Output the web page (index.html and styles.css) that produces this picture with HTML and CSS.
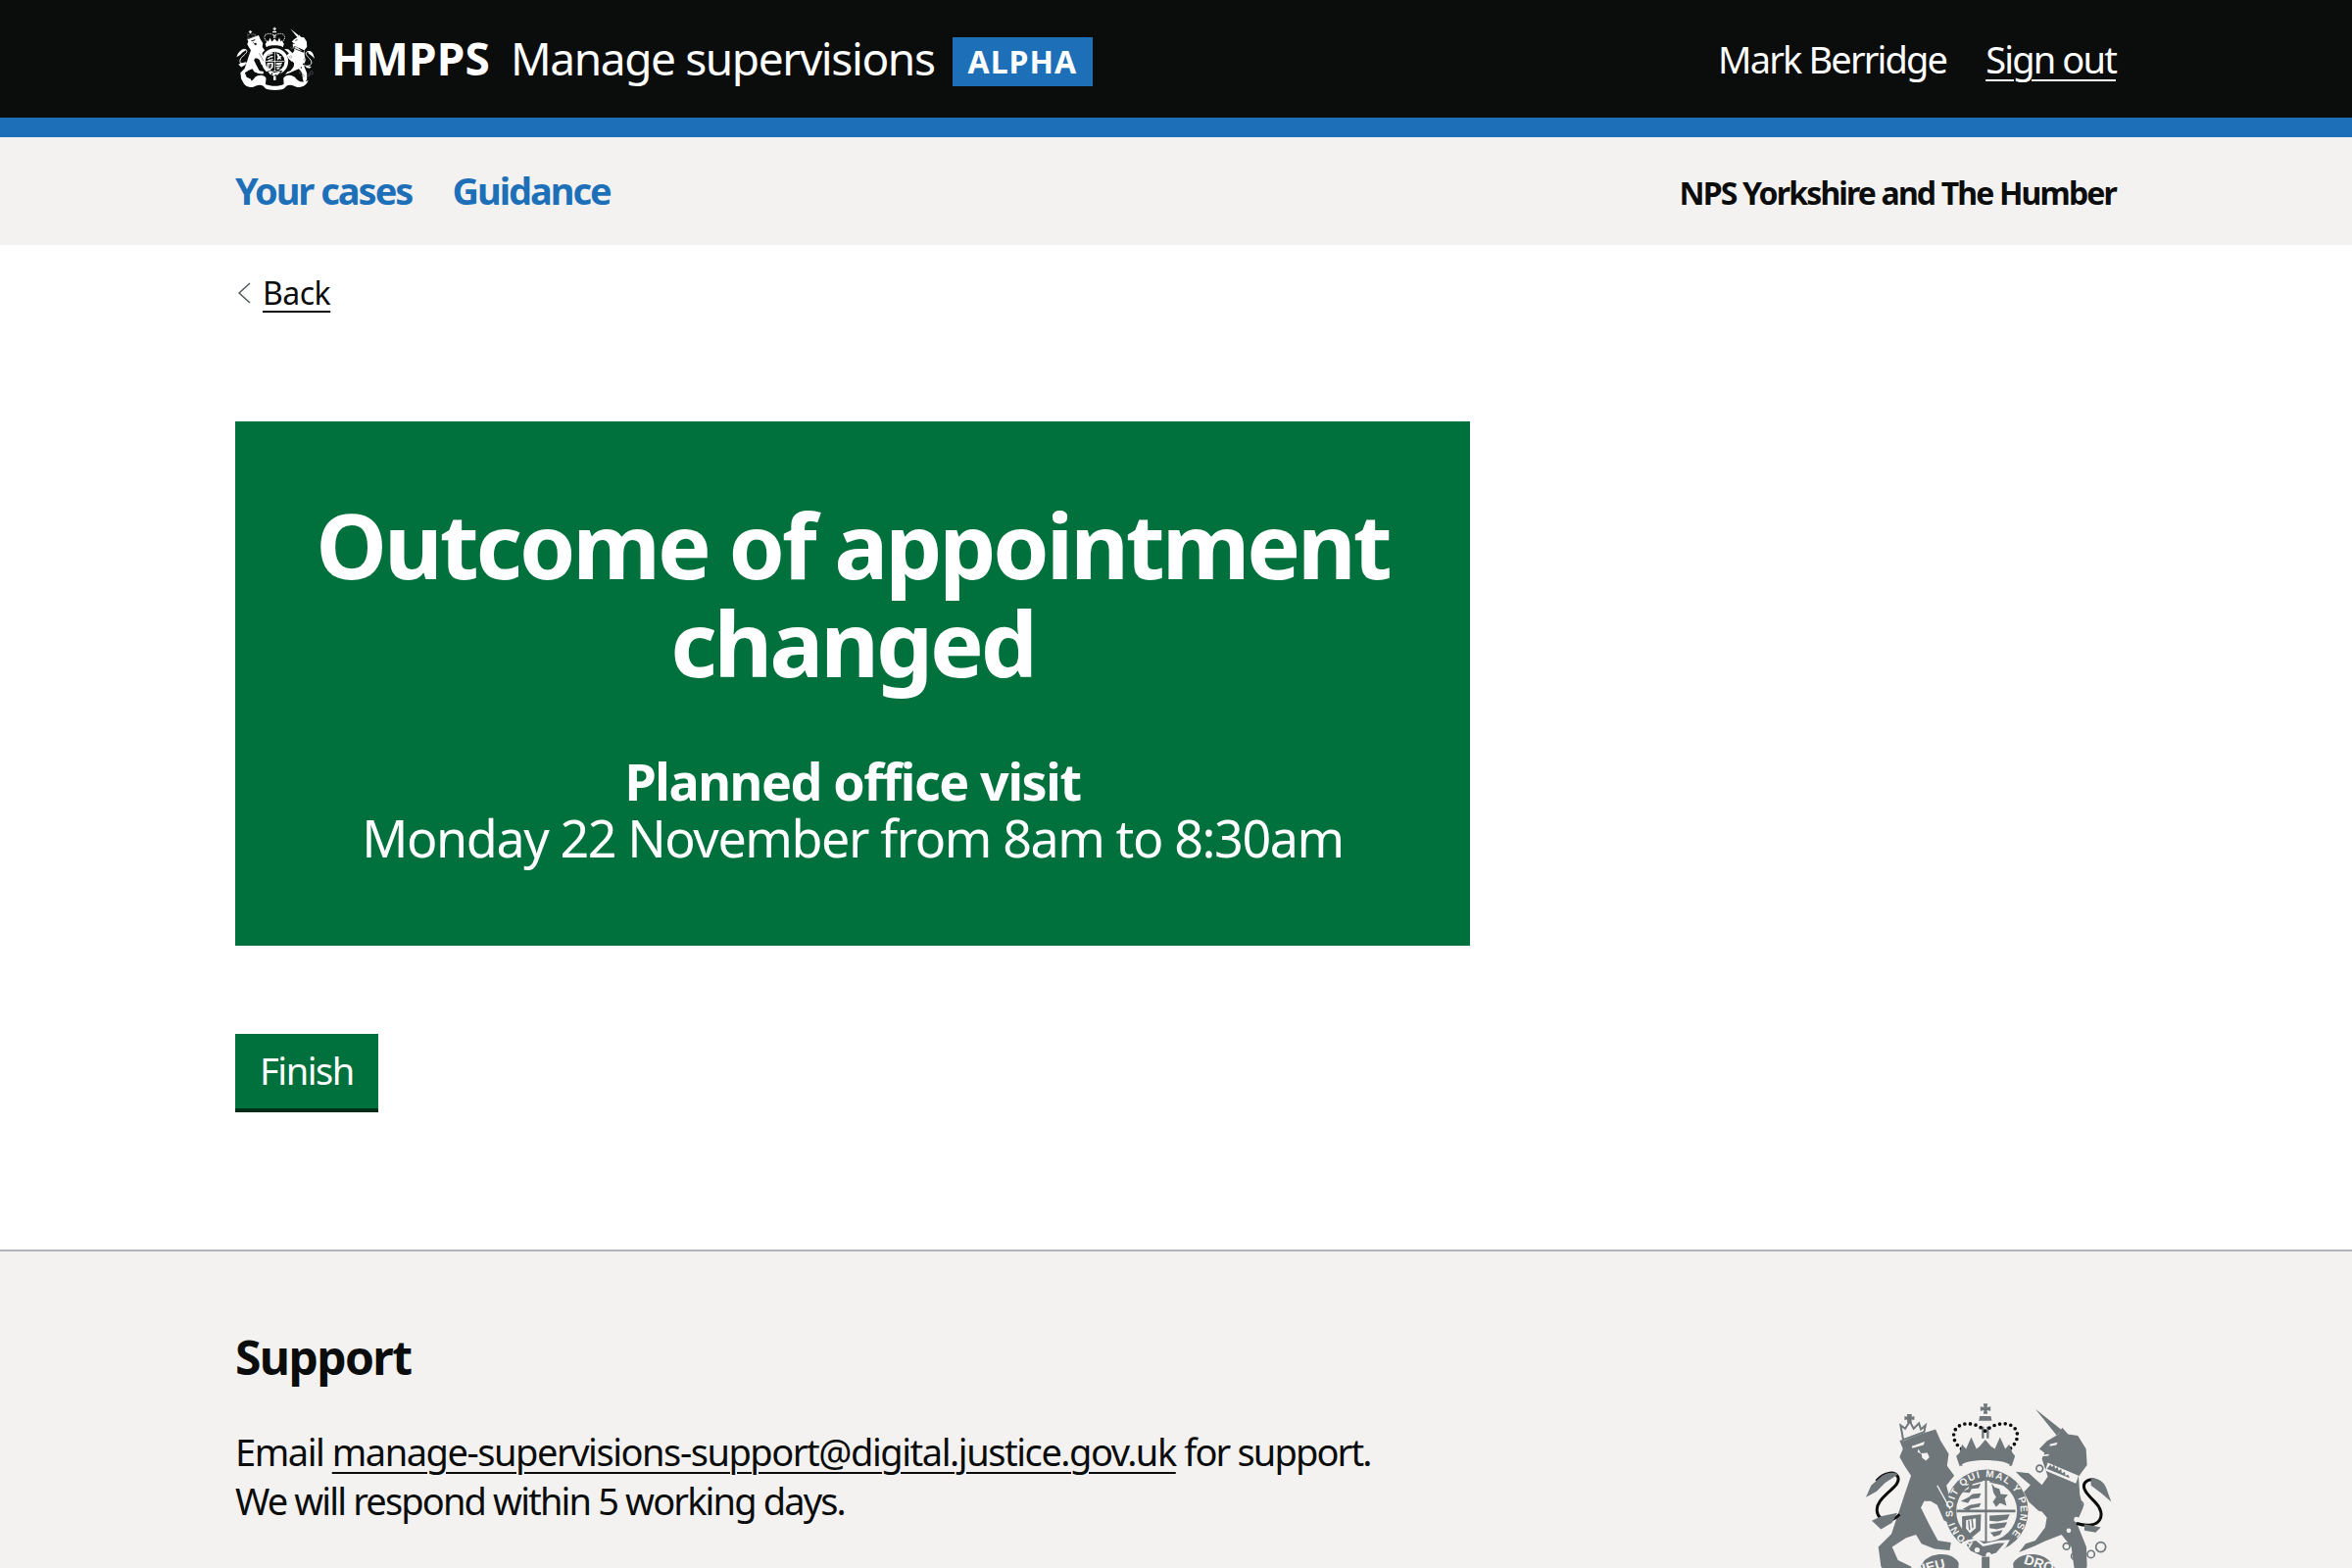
FILE: index.html
```html
<!DOCTYPE html>
<html lang="en">
<head>
<title>Outcome of appointment changed - Manage supervisions</title>
<link rel="stylesheet" href="styles.css">
</head>
<body>

<svg class="sprite" aria-hidden="true">
	<symbol id="crest" viewBox="60 95 770 620">
		<!-- crown -->
		<path d="M431 102h13l-2 11 11-2v13l-11-2 2 11h-13l2-11-11 2v-13l11 2z"/>
		<path d="M420 140h34l3 14h-40z"/>
		<path d="M426 172h7v36h-7zM441 172h7v36h-7z"/>
		<path class="pearls" d="M364 240C328 212 335 172 372 164C398 160 420 170 437 186C454 170 478 160 504 164C541 172 546 212 512 240"/>
		<path d="M358 252L366 226L378 240L394 204L410 240L420 232L437 212L454 232L466 240L482 204L498 240L510 226L520 252L528 262L518 292H358L348 262z"/>
		<path class="crest-light" d="M365 290C375 270 500 270 512 290C505 304 372 304 365 290z"/>
		<!-- garter and shield -->
		<circle cx="441" cy="430" r="127"/>
		<circle class="crest-light" cx="441" cy="430" r="93"/>
		<path d="M349 426h180v8H349zM436 336h6v190h-6z"/>
		<path d="M362 350l66-16v6l-62 15zM450 336l66 15-4 5-62-14z"/>
		<path d="M365 372l20-10 4-14 12 4 22-6-6 14-22 2-6 12zM362 400l24-12 12-10 26-2-6 14-26 4-8 12zM368 424l22-12 34-6-6 12-26 4-6 8z"/>
		<path d="M456 346l10 12 14 4 4 16 22 2-10 12 6 22-20-8-12 12-10-16 10-14-8-14z"/>
		<path d="M366 446l58-6-2 50-32 26-24-30z"/>
		<path class="crest-light" d="M378 458l30-6v30l-18 16-12-14z"/>
		<path d="M384 460l3 30 4-4-3-28zM394 456l3 28 4-4-3-26z"/>
		<path d="M450 444l62-4-8 16-30 6-24-2zM450 470l54-6-8 16-24 6-22-4zM452 496l38-8-8 14-18 6z"/>
		<path class="crest-light" d="M368 524L408 512 432 530 478 520 512 518 500 540 462 575 426 580 380 560 360 534z"/>
		<path d="M376 528L408 520 430 538 478 528 496 528 470 558 432 570 392 552z"/>
		<circle class="crest-light" cx="412" cy="549" r="8"/>
		<circle class="crest-light" cx="447" cy="564" r="8"/>
		<!-- lion -->
		<path d="M175 215L285 180L300 215L325 255L320 292L342 322L318 352L345 452L335 472L310 458L290 412L270 400H250L240 420L265 470L292 520L332 526L328 550L282 546L242 530L225 502L195 512L152 540L170 580L210 600L220 640L150 640L118 600L110 540L150 500L170 440L190 380L210 322L190 292L175 265L185 240z"/>
		<path class="crest-light" d="M180 206L252 178 250 190 186 216zM212 232l40-14-4 10-34 10zM232 240l8 14 20-2 6 14-10 10-12-8-2-12-12-6z"/>
		<path class="lion-claw" d="M290 352L330 424"/>
		<path class="thin" d="M175 440C130 486 86 440 115 400C140 366 178 352 170 326C160 306 126 312 104 338"/>
		<path d="M112 330C132 310 160 310 170 318L130 344L105 370L72 388L88 352z"/>
		<path d="M90 460l28-14 50-10-16 30-34 20z"/>
		<path class="crest-ring" d="M178 168l14 10 14-22 12 22 16-16 6 18 14-12-4 20-64 24z"/>
		<path d="M198 134h14v8l8-2v12l-8-2v10h-14v-10l-8 2v-12l8 2z"/>
		<!-- unicorn -->
		<path d="M590 118L670 182L656 200z"/>
		<path d="M602 240L625 216L660 196L672 175L690 195L720 200L745 240L748 290L722 325L726 380L736 420L716 466L746 540L748 600L722 650L708 600L700 540L670 502L620 522L590 536L540 556L560 530L590 520L620 480L625 450L610 432L600 430L570 402L555 372L575 350L546 326L530 310L570 314L610 350L628 325L610 270L618 252z"/>
		<path class="crest-light" d="M628 282L722 322 714 346 620 306zM634 226l24-6-4 8-20 4zM612 258l20-2-2 5-16 2z"/>
		<path d="M636 288l5 8 6-7 4 12 7-6 3 12 8-5 2 12 9-4 2 12 8-3 5 10-70-28z"/>
		<circle class="crest-light" cx="716" cy="456" r="8"/>
		<circle class="crest-light" cx="692" cy="490" r="7"/>
		<path class="thin" d="M716 468C790 490 812 440 770 400C740 372 726 348 752 336C772 328 786 340 800 360"/>
		<path d="M760 330C780 328 800 340 806 358L822 402L790 374L760 352z"/>
		<path d="M740 470l50 10-16 16-34-6z"/>
		<circle class="ring" cx="603" cy="300" r="10"/>
		<circle class="ring" cx="592" cy="385" r="11"/>
		<circle class="ring" cx="726" cy="410" r="10"/>
		<circle class="ring" cx="685" cy="538" r="10"/>
		<circle class="ring" cx="711" cy="568" r="11"/>
		<circle class="ring" cx="760" cy="562" r="11"/>
		<circle class="ring" cx="790" cy="540" r="15"/>
		<!-- motto scroll -->
		<path d="M128 612C180 640 232 620 250 582C282 552 342 558 356 590L350 650C400 672 480 672 526 650L522 590C542 554 610 554 636 586C660 622 700 642 760 612C750 652 700 692 640 672C600 652 560 642 530 690C500 710 380 710 350 690C320 642 280 652 240 672C180 692 138 652 128 612z"/>
		<path d="M426 570h24v40h-24z"/>
	</symbol>
</svg>

<header class="header">
	<div class="header-inner">
		<div class="brand">
			<svg class="brand-crest"><use href="#crest"/></svg>
			<span class="brand-org">HMPPS</span>
			<span class="brand-name">Manage supervisions</span>
			<strong class="tag">ALPHA</strong>
		</div>
		<div class="account">
			<span>Mark Berridge</span>
			<a href="#" class="account-link">Sign out</a>
		</div>
	</div>
</header>

<nav class="nav">
	<div class="nav-inner">
		<ul class="nav-links">
			<li><a href="#">Your cases</a></li>
			<li><a href="#">Guidance</a></li>
		</ul>
		<strong class="nav-region">NPS Yorkshire and The Humber</strong>
	</div>
</nav>

<div class="wrapper">
	<a href="#" class="back">
		<svg class="back-icon" viewBox="0 0 14 22"><path d="M13 1L2 11l11 10"/></svg>
		<span>Back</span>
	</a>

	<main class="main">
		<div class="panel">
			<h1 class="panel-title">Outcome of appointment changed</h1>
			<div class="panel-body">
				<strong>Planned office visit</strong><br>
				Monday 22 November from 8am to 8:30am
			</div>
		</div>
		<a href="#" class="button">Finish</a>
	</main>
</div>

<footer class="footer">
	<div class="footer-inner">
		<div class="support">
			<h2>Support</h2>
			<p>Email <a href="#">manage-supervisions-support@digital.justice.gov.uk</a> <span class="tight">for support.</span><br>
			<span class="tight">We will respond within 5 working days.</span></p>
		</div>
		<svg class="footer-crest" viewBox="60 95 770 620">
			<use href="#crest" x="60" y="95" width="770" height="620"/>
			<defs>
				<path id="garter-arc" d="M400 526A104 104 0 1 1 515 503"/>
			</defs>
			<text class="garter-text"><textPath href="#garter-arc" textLength="525">HONI SOIT QUI MAL Y PENSE</textPath></text>
			<text class="motto-text" x="316" y="604" text-anchor="end" transform="rotate(-14 316 604)">DIEU</text>
			<text class="motto-text" x="553" y="590" transform="rotate(18 553 590)">DROIT</text>
		</svg>
	</div>
</footer>

</body>
</html>
```

FILE: styles.css
```css
html, body {
	height: 100%;
}

body {
	display: flex;
	flex-direction: column;
	margin: 0;
	overflow: hidden;
	color: #0b0c0c;
	background: #fff;
	font-family: 'Noto Sans', Arial, sans-serif;
	font-size: 38px;
	line-height: 50px;
	letter-spacing: -1.45px;
}

a {
	color: inherit;
	text-decoration: underline;
	text-decoration-thickness: 2px;
	text-underline-offset: 6px;
}

.sprite {
	display: none;
}

.header-inner, .nav-inner, .footer-inner {
	display: flex;
	justify-content: space-between;
	width: 1920px;
	margin: 0 auto;
}

/* header */

.header {
	flex: none;
	color: #fff;
	background: #0b0c0c;
	border-bottom: 20px solid #1d70b8;
	--crest-bg: #0b0c0c;
}

.header-inner {
	align-items: center;
	height: 120px;
}

.brand {
	display: flex;
	align-items: center;
	font-size: 46px;
}

.brand-crest {
	width: 82px;
	height: 66px;
	margin-right: 16px;
	fill: currentColor;
}

.brand-org {
	margin-right: 21px;
	padding-bottom: 2px;
	font-weight: 700;
	letter-spacing: 0.2px;
}

.brand-name {
	margin-right: 18px;
	padding-bottom: 2px;
	letter-spacing: -1.4px;
}

.tag {
	margin-top: 5px;
	padding: 0 16px;
	background: #1d70b8;
	font-size: 32px;
	line-height: 50px;
	letter-spacing: 1px;
}

.account {
	display: flex;
	gap: 40px;
	padding-right: 1px;
	font-size: 38px;
	letter-spacing: -1.85px;
}

/* nav */

.nav {
	flex: none;
	background: #f3f2f1;
}

.nav-inner {
	align-items: center;
	height: 110px;
}

.nav-links {
	display: flex;
	gap: 41px;
	margin: 0;
	padding: 0 0 2px;
	list-style: none;
	font-weight: 700;
	letter-spacing: -2px;
}

.nav-links a {
	color: #1d70b8;
	text-decoration: none;
}

.nav-region {
	padding: 4px 1px 0 0;
	font-size: 32px;
	letter-spacing: -1.85px;
}

/* main */

.wrapper {
	flex: none;
	width: 1920px;
	margin: 0 auto;
}

.back {
	display: inline-flex;
	align-items: center;
	gap: 12px;
	margin-top: 29px;
	margin-bottom: 1px;
	padding-left: 2px;
	font-size: 32px;
	line-height: 40px;
	letter-spacing: -0.5px;
}

.back-icon {
	width: 14px;
	height: 22px;
	fill: none;
	stroke: #505a5f;
	stroke-width: 1.5;
}

.main {
	padding-top: 110px;
}

.panel {
	box-sizing: border-box;
	width: 1260px;
	height: 535px;
	padding: 76px 60px 0;
	color: #fff;
	background: #00703c;
	text-align: center;
}

.panel-title {
	margin: 0 0 62px;
	font-size: 92px;
	line-height: 100px;
	font-weight: 700;
	letter-spacing: -3.1px;
}

.panel-body {
	font-size: 52px;
	line-height: 58px;
	letter-spacing: -1.4px;
}

.button {
	display: inline-block;
	margin-top: 90px;
	padding: 12px 25px 14px;
	color: #fff;
	background: #00703c;
	box-shadow: 0 4px 0 #002d18;
	text-decoration: none;
}

/* footer */

.footer {
	flex: 1;
	margin-top: 144px;
	overflow: hidden;
	background: #f3f2f1;
	border-top: 2px solid #b1b4b6;
	--crest-bg: #f3f2f1;
}

.support {
	padding-top: 78px;
}

.support h2 {
	margin: 0 0 41px;
	font-size: 48px;
	line-height: 60px;
	font-weight: 700;
	letter-spacing: -1.6px;
}

.support p {
	margin: 0;
}

.tight {
	letter-spacing: -1.85px;
}

.footer-crest {
	flex: none;
	width: 257px;
	height: 207px;
	margin: 153px 3px 0 0;
	fill: #6f777b;
}

/* crest parts, header and footer share one symbol */

.crest-light {
	fill: var(--crest-bg);
}

.pearls {
	fill: none;
	stroke: currentColor;
	stroke-width: 11;
	stroke-linecap: round;
	stroke-dasharray: 0 17;
}

.footer-crest .pearls, .footer-crest .thin {
	stroke: #6f777b;
}

.thin {
	fill: none;
	stroke: currentColor;
	stroke-width: 9;
}

.ring {
	fill: none;
	stroke: #6f777b;
	stroke-width: 5;
}

.brand-crest .ring {
	stroke: currentColor;
}

.lion-claw {
	fill: none;
	stroke: var(--crest-bg);
	stroke-width: 4;
}

.crest-ring {
	fill: none;
	stroke: #6f777b;
	stroke-width: 6;
}

.brand-crest .crest-ring {
	stroke: currentColor;
}

.garter-text {
	fill: #f3f2f1;
	font-family: 'Liberation Sans', Arial, sans-serif;
	font-size: 30px;
	font-weight: 700;
	letter-spacing: 0;
}

.motto-text {
	fill: #f3f2f1;
	font-family: 'Liberation Sans', Arial, sans-serif;
	font-size: 42px;
	font-weight: 700;
	letter-spacing: 0;
}
```
